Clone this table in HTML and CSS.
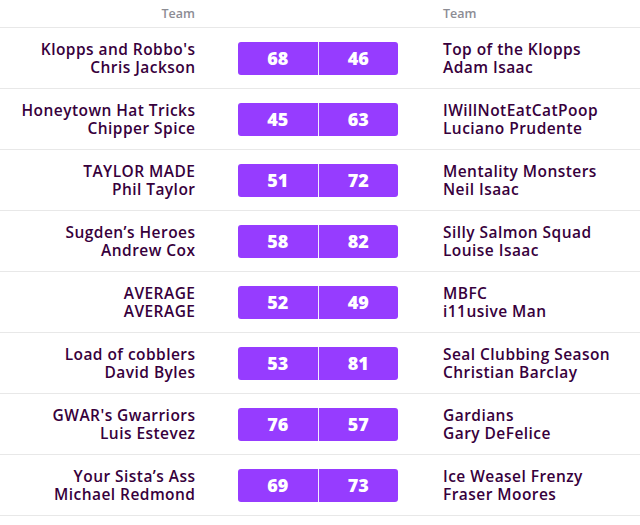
FILE: index.html
```html
<!DOCTYPE html>
<html>
<head>
<meta charset="utf-8">
<link rel="stylesheet" href="styles.css">
</head>
<body>
<div class="table">
  <div class="head">
    <div class="h-left">Team</div>
    <div></div>
    <div class="h-right">Team</div>
  </div>
  <div class="row">
    <div class="team left"><span>Klopps and Robbo's</span><span>Chris Jackson</span></div>
    <div class="score"><span>68</span><span>46</span></div>
    <div class="team right"><span>Top of the Klopps</span><span>Adam Isaac</span></div>
  </div>
  <div class="row">
    <div class="team left"><span>Honeytown Hat Tricks</span><span>Chipper Spice</span></div>
    <div class="score"><span>45</span><span>63</span></div>
    <div class="team right"><span>IWillNotEatCatPoop</span><span>Luciano Prudente</span></div>
  </div>
  <div class="row">
    <div class="team left"><span>TAYLOR MADE</span><span>Phil Taylor</span></div>
    <div class="score"><span>51</span><span>72</span></div>
    <div class="team right"><span>Mentality Monsters</span><span>Neil Isaac</span></div>
  </div>
  <div class="row">
    <div class="team left"><span>Sugden’s Heroes</span><span>Andrew Cox</span></div>
    <div class="score"><span>58</span><span>82</span></div>
    <div class="team right"><span>Silly Salmon Squad</span><span>Louise Isaac</span></div>
  </div>
  <div class="row">
    <div class="team left"><span>AVERAGE</span><span>AVERAGE</span></div>
    <div class="score"><span>52</span><span>49</span></div>
    <div class="team right"><span>MBFC</span><span>i11usive Man</span></div>
  </div>
  <div class="row">
    <div class="team left"><span>Load of cobblers</span><span>David Byles</span></div>
    <div class="score"><span>53</span><span>81</span></div>
    <div class="team right"><span>Seal Clubbing Season</span><span>Christian Barclay</span></div>
  </div>
  <div class="row">
    <div class="team left"><span>GWAR's Gwarriors</span><span>Luis Estevez</span></div>
    <div class="score"><span>76</span><span>57</span></div>
    <div class="team right"><span>Gardians</span><span>Gary DeFelice</span></div>
  </div>
  <div class="row">
    <div class="team left"><span>Your Sista’s Ass</span><span>Michael Redmond</span></div>
    <div class="score"><span>69</span><span>73</span></div>
    <div class="team right"><span>Ice Weasel Frenzy</span><span>Fraser Moores</span></div>
  </div>
</div>
</body>
</html>
```
FILE: styles.css
```css
html, body {
  margin: 0;
  padding: 0;
  background: #fff;
}
body {
  font-family: "Open Sans", Lato, sans-serif;
  color: #37003c;
}
.table {
  width: 640px;
}
.head {
  display: grid;
  grid-template-columns: 195px 248px 1fr;
  height: 28px;
  border-bottom: 1px solid #e8e8e8;
  box-sizing: border-box;
  font-size: 12.5px;
  font-weight: 600;
  color: #8c8c94;
  align-items: center;
}
.h-left {
  text-align: right;
}
.row {
  display: grid;
  grid-template-columns: 195px 43px 160px 45px 1fr;
  height: 61px;
  box-sizing: border-box;
  border-bottom: 1px solid #e8e8e8;
  align-items: center;
}
.team {
  display: flex;
  flex-direction: column;
  font-size: 15.5px;
  letter-spacing: 0.45px;
  font-weight: 600;
  line-height: 18px;
}
.team.left {
  grid-column: 1;
  text-align: right;
  margin-right: -0.45px;
}
.score {
  grid-column: 3;
  display: flex;
  height: 33px;
  background: #963cff;
  border-radius: 3px;
  color: #fff;
  font-size: 18px;
  font-weight: 800;
}
.score span {
  flex: 1;
  display: flex;
  align-items: center;
  justify-content: center;
}
.score span + span {
  border-left: 1px solid #f4ecff;
}
.team.right {
  grid-column: 5;
}
```
